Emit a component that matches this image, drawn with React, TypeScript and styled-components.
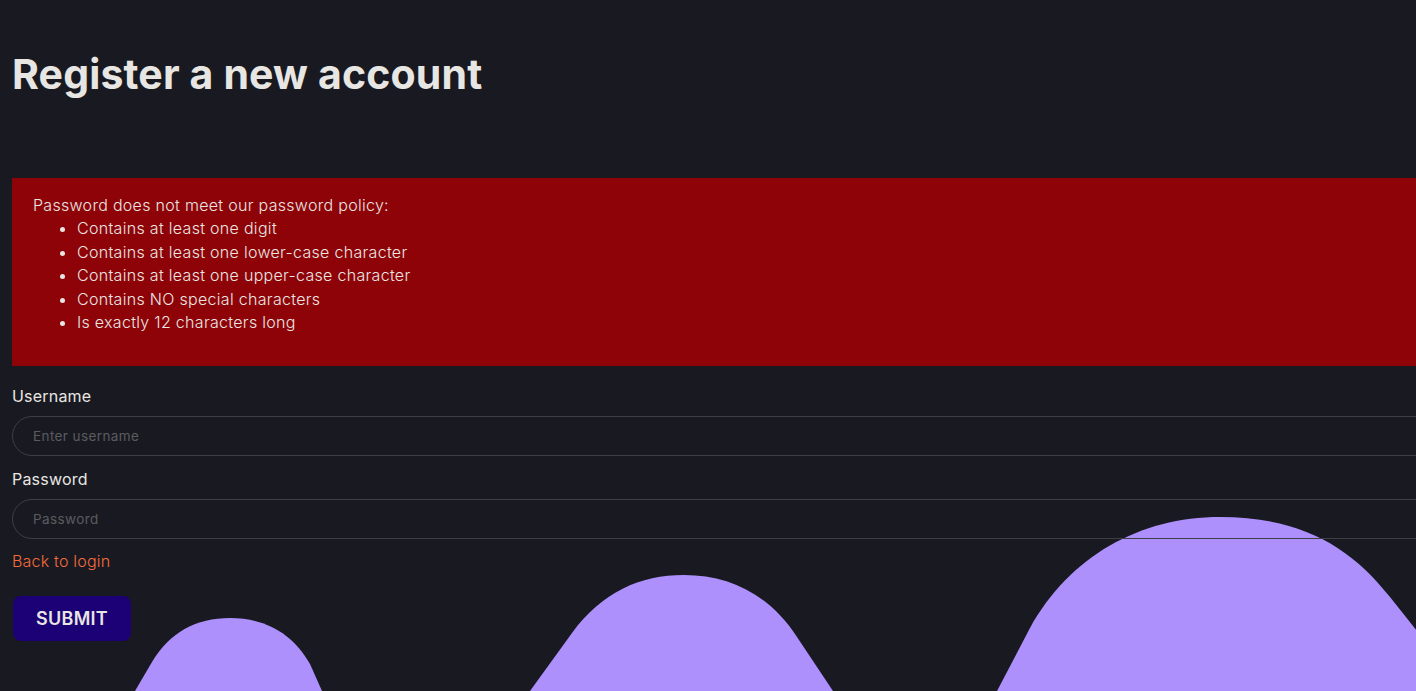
import React from "react";
import styled, { createGlobalStyle } from "styled-components";

const GlobalStyle = createGlobalStyle`
	html, body {
		margin: 0;
		padding: 0;
		background: #191a21;
		overflow: hidden;
	}
	body {
		font-family: Inter, "Noto Sans", sans-serif;
		color: #e8e6e3;
	}
`

const rules = [
	"Contains at least one digit",
	"Contains at least one lower-case character",
	"Contains at least one upper-case character",
	"Contains NO special characters",
	"Is exactly 12 characters long",
];

export default function App() {
	return (
		<>
			<GlobalStyle />
			<Page>
				<Waves viewBox="0 500 1416 191" preserveAspectRatio="none">
					<path d="M135 691 L152 662 C170 632 196 618 230 618 C266 618 293 634 310 664 L322 691 Z" />
					<path d="M530 691 L572 633 C602 592 640 575 684 575 C730 575 770 595 797 637 L833 691 Z" />
					<path d="M997 691 L1030 628 C1070 556 1140 517 1220 517 C1300 517 1350 546 1390 597 L1440 660 L1440 691 Z" />
				</Waves>
				<Content>
					<Title>Register a new account</Title>
					<Alert>
						<AlertText>Password does not meet our password policy:</AlertText>
						<RuleList>
							{rules.map((r) => (
								<li key={r}>{r}</li>
							))}
						</RuleList>
					</Alert>
					<Form>
						<Label htmlFor="username">Username</Label>
						<Input id="username" placeholder="Enter username" type="text" />
						<Label htmlFor="password">Password</Label>
						<Input id="password" placeholder="Password" type="password" />
						<BackLink href="#">Back to login</BackLink>
						<Submit type="button">SUBMIT</Submit>
					</Form>
				</Content>
			</Page>
		</>
	)
}

const Page = styled.div`
	position: relative;
	width: 100vw;
	height: 691px;
	overflow: hidden;
`
const Waves = styled.svg`
	position: absolute;
	left: 0;
	bottom: 0;
	width: 1416px;
	height: 191px;
	fill: #ae90fd;
	z-index: 0;
`
const Content = styled.div`
	position: relative;
	z-index: 1;
	width: 1480px;
	padding-left: 12px;
	display: flex;
	flex-direction: column;
`
const Title = styled.h1`
	margin: 50px 0 0;
	font-size: 41px;
	line-height: 48px;
	font-weight: 700;
	letter-spacing: 0.15px;
	color: #e8e6e3;
`
const Alert = styled.div`
	margin-top: 80px;
	background: #8e0307;
	padding: 16px 21px 32px;
	font-size: 16px;
	line-height: 23.4px;
	font-weight: 300;
	letter-spacing: 0.3px;
	color: #e8e6e3;
`
const AlertText = styled.div``

const RuleList = styled.ul`
	margin: 0;
	padding-left: 44px;
`
const Form = styled.form`
	display: flex;
	flex-direction: column;
	align-items: flex-start;
	margin-top: 18px;
`
const Label = styled.label`
	font-size: 16px;
	line-height: 24px;
	font-weight: 400;
	letter-spacing: 0.2px;
	color: #e8e6e3;
	margin-bottom: 8px;
`
const Input = styled.input`
	box-sizing: border-box;
	width: 100%;
	height: 40px;
	border: 1px solid #3e3f44;
	border-radius: 20px;
	background: transparent;
	padding: 0 20px;
	margin-bottom: 10.5px;
	font-family: Inter, "Noto Sans", sans-serif;
	font-size: 13.5px;
	letter-spacing: 0.4px;
	color: #e8e6e3;
	outline: none;

	&::placeholder {
		color: #5b5b60;
		opacity: 1;
	}
`
const BackLink = styled.a`
	font-size: 16px;
	line-height: 24px;
	font-weight: 300;
	letter-spacing: 0.2px;
	color: #f66a3c;
	text-decoration: none;
`
const Submit = styled.button`
	margin: 23px 0 0 1px;
	width: 118px;
	height: 45px;
	border: none;
	border-radius: 8px;
	background: #1c0075;
	color: #e8e6e3;
	font-family: Inter, "Noto Sans", sans-serif;
	font-size: 18px;
	font-weight: 600;
	letter-spacing: 0.3px;
	cursor: pointer;
`
